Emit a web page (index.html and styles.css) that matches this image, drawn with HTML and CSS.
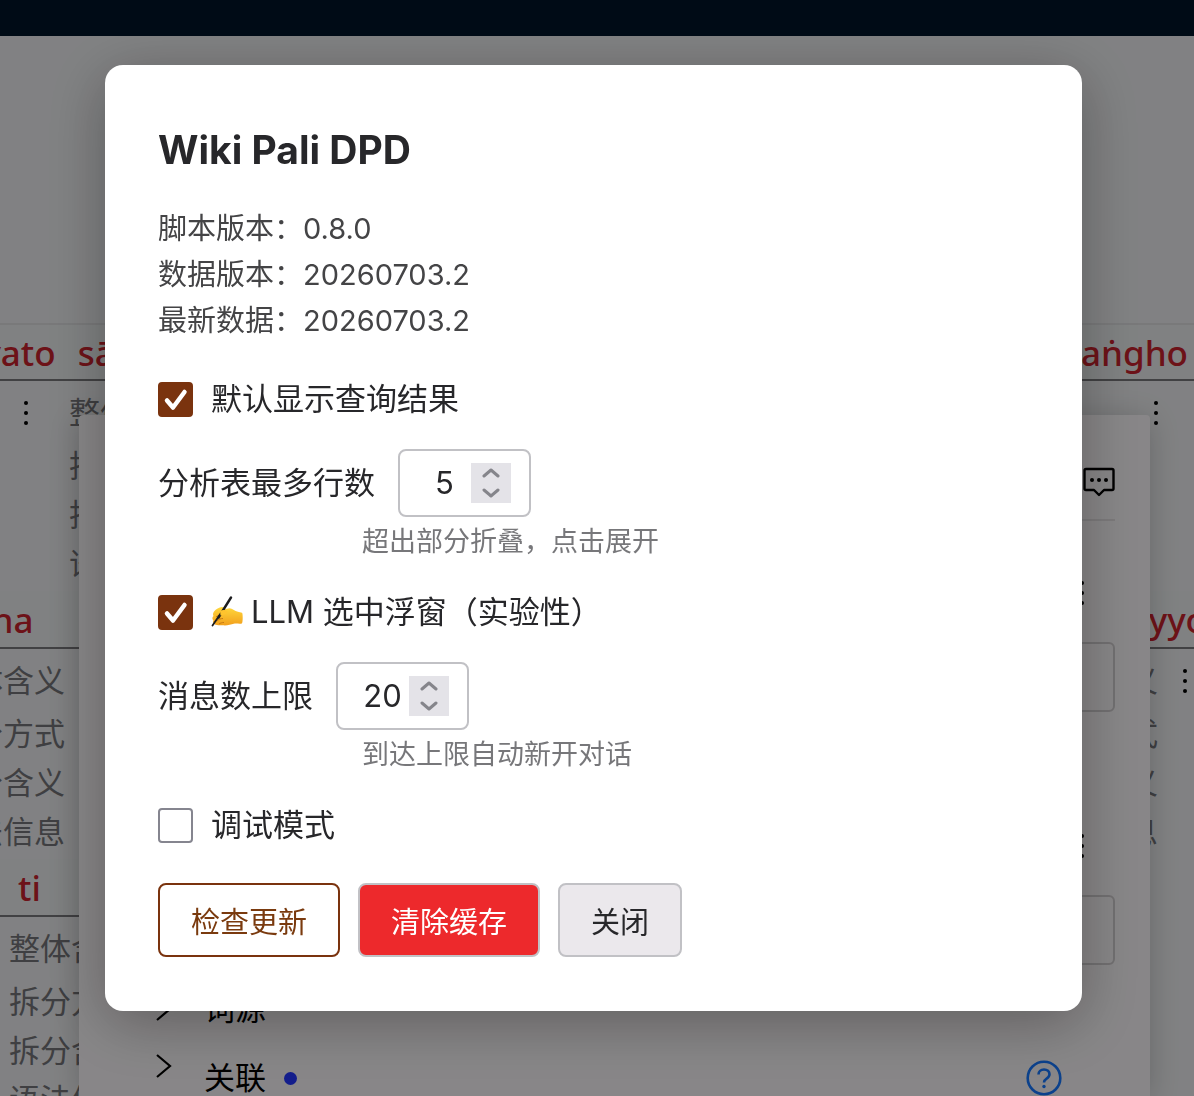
FILE: index.html
```html
<!DOCTYPE html>
<html lang="zh-CN">
<head>
<meta charset="utf-8">
<meta name="viewport" content="width=device-width, initial-scale=1">
<title>Wiki Pali DPD</title>
<link rel="stylesheet" href="styles.css">
</head>
<body>
<header class="topbar"></header>

<main class="reader">
  <section class="line">
    <div class="words words-1"><span>bhagavato</span><span>sāvaka</span><span class="last">saṅgho</span></div>
    <div class="glosses glosses-1">
      <span class="more"><i></i><i></i><i></i></span>
      <ul><li>整体含义</li><li>拆分方式</li><li>拆分含义</li><li>语法信息</li></ul>
      <span class="more last"><i></i><i></i><i></i></span>
    </div>
  </section>
  <section class="line">
    <div class="words words-2"><span>yadidaṁ na</span><span class="last">āhuneyyo</span></div>
    <div class="glosses glosses-2">
      <ul><li>整体含义</li><li>拆分方式</li><li>拆分含义</li><li>语法信息</li></ul>
      <ul class="last"><li>整体含义</li><li>拆分方式</li><li>拆分含义</li><li>语法信息</li></ul>
      <span class="more"><i></i><i></i><i></i></span>
    </div>
  </section>
  <section class="line">
    <div class="words words-3"><span>ti</span></div>
    <div class="glosses glosses-3">
      <ul><li>整体含义</li><li>拆分方式</li><li>拆分含义</li><li>语法信息</li></ul>
    </div>
  </section>
</main>

<aside class="panel">
  <div class="panel-head">
    <svg class="comment" viewBox="0 0 32 30" fill="none" stroke="#000" stroke-width="2.4" stroke-linejoin="round"><path d="M3 2h26a1.500 1.500 0 0 1 1.500 1.500v18a1.500 1.500 0 0 1-1.500 1.500h-8l-5 5-5-5H3a1.500 1.500 0 0 1-1.500-1.500v-18A1.500 1.500 0 0 1 3 2z"/><g fill="#000" stroke="none"><circle cx="9" cy="13" r="2"/><circle cx="16" cy="13" r="2"/><circle cx="23" cy="13" r="2"/></g></svg>
  </div>
  <div class="field"><span class="more"><i></i><i></i><i></i></span><div class="field-box"></div></div>
  <div class="field"><span class="more"><i></i><i></i><i></i></span><div class="field-box"></div></div>
  <div class="sections">
    <div class="section">
      <svg class="chevron" viewBox="0 0 16 44" fill="none" stroke="#000" stroke-width="2.2"><path d="M1 11l13 11L1 33"/></svg>
      <span>词源</span>
    </div>
    <div class="section section-tall">
      <svg class="chevron" viewBox="0 0 16 44" fill="none" stroke="#000" stroke-width="2.2"><path d="M1 11l13 11L1 33"/></svg>
      <span>关联</span>
      <b class="badge"></b>
      <svg class="help" viewBox="0 0 36 36" fill="none" stroke="#1677ff" stroke-width="2.600"><circle cx="18" cy="18" r="16.300"/><path d="M12.500 14.500c0-3 2.300-5 5.500-5s5.500 2 5.500 4.800c0 2.500-1.500 3.500-3.200 4.500-1.600 1-2.300 1.700-2.300 3.700"/><circle cx="18" cy="26.500" r="1.700" fill="#1677ff" stroke="none"/></svg>
    </div>
  </div>
</aside>

<div class="overlay">
  <div class="modal" role="dialog" aria-modal="true" aria-labelledby="title">
    <h1 id="title">Wiki Pali DPD</h1>
    <div class="versions">
      <p>脚本版本：0.8.0</p>
      <p>数据版本：20260703.2</p>
      <p>最新数据：20260703.2</p>
    </div>
    <div class="row check">
      <input type="checkbox" id="show" checked>
      <label for="show">默认显示查询结果</label>
    </div>
    <div class="row">
      <label for="rows">分析表最多行数</label>
      <div class="number">
        <input type="number" id="rows" value="5">
        <div class="stepper">
          <button type="button" aria-label="+"><svg viewBox="0 0 18 10"><path d="M2 8l7-6 7 6"/></svg></button>
          <button type="button" aria-label="-"><svg viewBox="0 0 18 10"><path d="M2 2l7 6 7-6"/></svg></button>
        </div>
      </div>
    </div>
    <p class="hint">超出部分折叠，点击展开</p>
    <div class="row check">
      <input type="checkbox" id="llm" checked>
      <label for="llm" class="with-icon">
        <svg class="writing" viewBox="0 0 32 32" aria-hidden="true"><defs><linearGradient id="skin" x1="0" y1="0" x2="0" y2="1"><stop offset="0" stop-color="#ffd83c"/><stop offset="1" stop-color="#f2a01c"/></linearGradient></defs><path fill="url(#skin)" d="M3 15.500c2-2.500 5-4.500 8-4.600 2 0 3 1 2.500 2.300l5-1c3 .3 5 2.300 7.500 3.300l5 1.300c1 .4 1 10.500-.2 10.800-3 .6-5.300-.5-8 .2-3 .8-7 2-11 1.500-4-.3-8.500.2-8.600-1.800-1.500-.8-1.500-2-.7-3C1 23.500 1 21 2.500 20c-.8-1.500-.6-3 .5-4.500z"/><path d="M5 21c2.500-2 5-3.500 8-4M5.500 25c2-1.500 4-2.500 6.500-2.500M8 28c1.500-1 3-1.500 5-1.500" fill="none" stroke="#c77a12" stroke-width="1"/><path d="M20 1.500L7.500 21.500" stroke="#1c1c1e" stroke-width="2.400" stroke-linecap="round"/><path d="M8 20l-6.500 9.500" stroke="#1c1c1e" stroke-width="1.800" stroke-linecap="round"/><path d="M9 15c2.500-1.500 5.500-1.500 8 1-2.500 2-5 3.500-7.500 3.500z" fill="#ffc42e"/></svg>
        <span>LLM 选中浮窗（实验性）</span>
      </label>
    </div>
    <div class="row">
      <label for="limit">消息数上限</label>
      <div class="number">
        <input type="number" id="limit" value="20">
        <div class="stepper">
          <button type="button" aria-label="+"><svg viewBox="0 0 18 10"><path d="M2 8l7-6 7 6"/></svg></button>
          <button type="button" aria-label="-"><svg viewBox="0 0 18 10"><path d="M2 2l7 6 7-6"/></svg></button>
        </div>
      </div>
    </div>
    <p class="hint">到达上限自动新开对话</p>
    <div class="row check">
      <input type="checkbox" id="debug">
      <label for="debug">调试模式</label>
    </div>
    <div class="actions">
      <button type="button" class="btn btn-outline">检查更新</button>
      <button type="button" class="btn btn-danger">清除缓存</button>
      <button type="button" class="btn">关闭</button>
    </div>
  </div>
</div>
</body>
</html>
```

FILE: styles.css
```css
* { box-sizing: border-box; }
body {
  margin: 0;
  height: 100vh;
  overflow: hidden;
  background: #ebecee;
  color: #27272a;
  font-family: Inter, "Noto Sans CJK SC", sans-serif;
}
h1, p, ul { margin: 0; padding: 0; }
ul { list-style: none; }

.topbar { height: 36px; background: #001529; }

/* Reading area */
.reader { padding-top: 287px; }
.line { height: 268px; overflow: hidden; }
.words {
  display: flex;
  height: 58px;
  border-bottom: 2px solid #77777a;
  background: #e9eced;
  color: #c6222c;
  font-family: "Noto Sans", sans-serif;
  font-size: 35px;
  font-weight: 500;
  line-height: 58px;
  white-space: nowrap;
}
.last { margin-left: auto; }
.words-1 { gap: 22px; margin-left: -123px; padding-right: 6px; border-top: 2px solid #dcdddf; line-height: 56px; }
.words-2 { margin-left: -162px; margin-right: -13px; }
.words-3 { width: 50%; padding-left: 18px; }
.glosses {
  display: flex;
  padding-top: 7px;
  color: #747478;
  font-size: 31px;
  line-height: 49px;
  white-space: nowrap;
}
.glosses li:first-child { margin-bottom: 4px; }
.glosses-1 { gap: 41px; padding-left: 24px; padding-right: 36px; }
.glosses-2 { gap: 25px; margin-left: -59px; padding-right: 7px; }
.glosses-3 { padding-left: 9px; }

.more { display: flex; flex-direction: column; gap: 6px; padding-top: 13px; }
.more i { width: 4px; height: 4px; border-radius: 50%; background: #000; }

/* Floating dictionary panel, laid over the reading area */
.panel {
  position: absolute;
  top: 415px;
  left: 79px;
  right: 44px;
  bottom: 0;
  overflow: hidden;
  padding: 0 35px;
  border-radius: 4px 4px 0 0;
  background: #f8f5f7;
  box-shadow: 0 4px 30px rgba(0, 0, 0, .2);
}
.panel-head {
  display: flex;
  justify-content: flex-end;
  height: 106px;
  padding-top: 52px;
  border-bottom: 2px solid #e2dfe1;
}
.comment { width: 32px; height: 30px; }
.field { display: flex; flex-direction: column; height: 253px; padding-top: 47px; }
.field .more { align-self: flex-end; padding: 13px 31px 0 0; }
.field-box {
  height: 70px;
  margin-top: 37px;
  border: 2px solid #cfccce;
  border-radius: 6px;
}
.field + .field { height: 206px; }
.sections { margin-top: 7px; padding: 0 53px 0 42px; font-size: 31px; line-height: 44px; color: #000; }
.section { display: flex; align-items: center; height: 44px; margin-bottom: 13px; }
.section-tall { height: 68px; }
.chevron { align-self: flex-start; width: 16px; height: 44px; margin-right: 32px; }
.badge { width: 13px; height: 13px; margin-left: 18px; border-radius: 50%; background: #2436ff; }
.help { width: 36px; height: 36px; margin-left: auto; }

/* Settings dialog */
.overlay {
  position: fixed;
  inset: 0;
  display: flex;
  align-items: flex-start;
  padding: 65px 112px 0 105px;
  background: rgba(0, 0, 0, .45);
}
.modal {
  flex: 1;
  padding: 54px 53px;
  border-radius: 18px;
  background: #fff;
  box-shadow: 0 12px 60px rgba(0, 0, 0, .3);
  font-size: 31px;
}
h1 { font-size: 39px; line-height: 62px; font-weight: 700; }
.versions {
  margin: 25px 0 32px;
  color: #444446;
  font-size: 29px;
  line-height: 46px;
}
.row { display: flex; align-items: center; gap: 23px; line-height: 46px; }
.check { gap: 18px; margin-bottom: 27px; }
.check input {
  appearance: none;
  width: 35px;
  height: 35px;
  margin: 0;
  border: 2px solid #85858f;
  border-radius: 4px;
  background: #fff;
}
.check input:checked {
  border-color: #7a330e;
  background: #7a330e url("data:image/svg+xml,%3Csvg xmlns='http://www.w3.org/2000/svg' viewBox='0 0 31 31' fill='none' stroke='white' stroke-width='4.500' stroke-linecap='round' stroke-linejoin='round'%3E%3Cpath d='M7 16.500l6 7L24.500 8'/%3E%3C/svg%3E") center / 31px 31px no-repeat;
}
.with-icon { display: flex; align-items: center; gap: 8px; }
.writing { width: 32px; height: 32px; }
.number {
  display: flex;
  align-items: center;
  height: 68px;
  width: 133px;
  padding: 0 18px;
  border: 2px solid #c1c1c5;
  border-radius: 8px;
}
.number input {
  flex: 1;
  min-width: 0;
  padding: 0;
  border: 0;
  outline: 0;
  background: none;
  color: inherit;
  font: inherit;
  text-align: center;
  appearance: textfield;
}
.number input::-webkit-inner-spin-button { appearance: none; margin: 0; }
.stepper { display: flex; flex-direction: column; width: 40px; height: 40px; background: #e4e3e8; }
.stepper button {
  display: flex;
  flex: 1;
  align-items: center;
  justify-content: center;
  padding: 0;
  border: 0;
  background: none;
}
.stepper svg { width: 18px; height: 10px; fill: none; stroke: #85858b; stroke-width: 3; stroke-linecap: round; stroke-linejoin: round; }
.hint {
  margin: 5px 0 27px;
  padding-left: 204px;
  color: #77777a;
  font-size: 27px;
  line-height: 40px;
}
.actions { display: flex; gap: 18px; margin-top: 35px; }
.btn {
  height: 74px;
  padding: 0 31px;
  border: 2px solid #c1c1c5;
  border-radius: 8px;
  background: #ebe8ec;
  color: #27272a;
  font: inherit;
  font-size: 29px;
}
.btn-outline { border-color: #7a330e; background: #fff; color: #7a3a0e; }
.btn-danger { background: #ed292c; color: #fff; }
```
